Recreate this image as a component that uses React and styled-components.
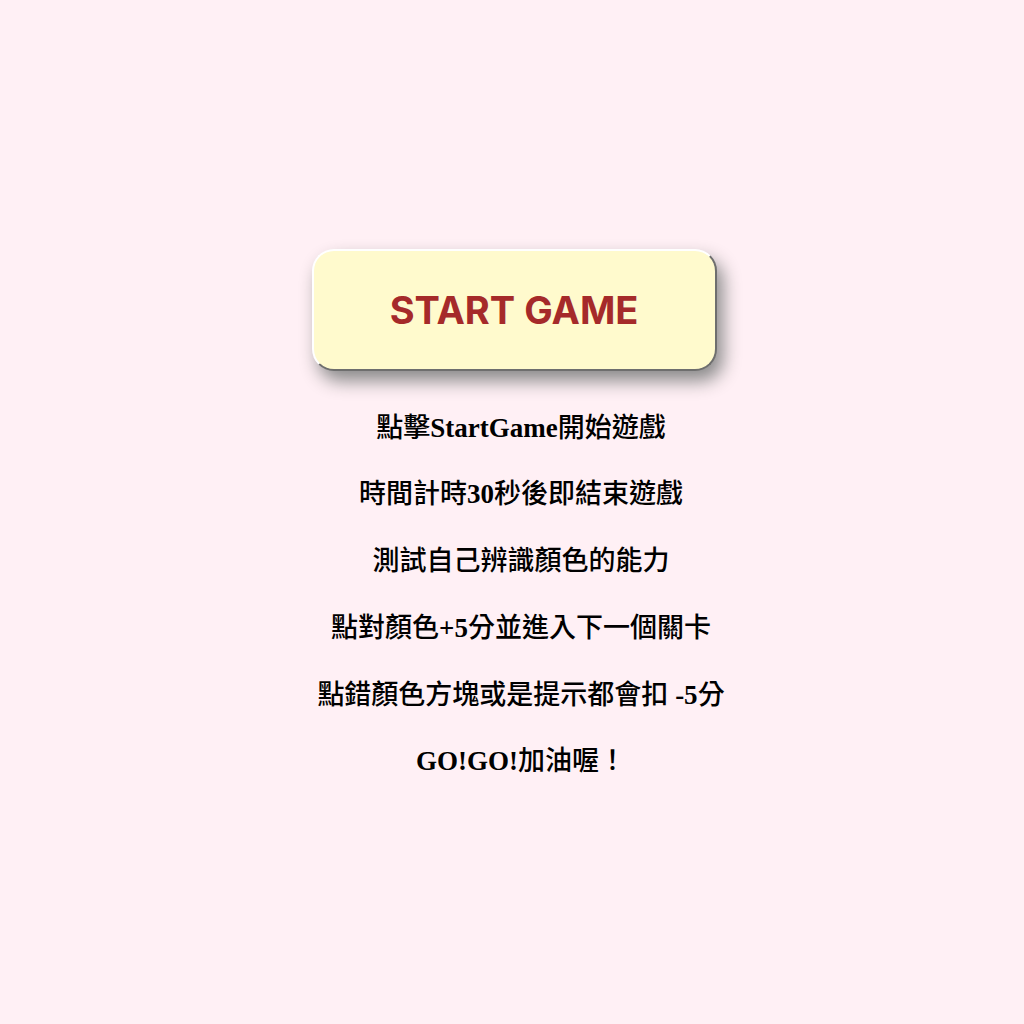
import React from 'react';
import styled, { createGlobalStyle } from 'styled-components';

const GlobalStyle = createGlobalStyle`
	html, body {
		margin: 0;
		padding: 0;
		background: #fff0f5;
	}
`;

const Page = styled.div`
	min-height: 100vh;
	display: flex;
	flex-direction: column;
	align-items: center;
	justify-content: center;
	padding: 6px 0 0 4px;
	box-sizing: border-box;
`;

const StartButton = styled.button`
	width: 405px;
	height: 122px;
	box-sizing: border-box;
	background: #fffacd;
	border: 2px solid #ffffff;
	border-bottom-color: #6e6e6e;
	border-right-color: #6e6e6e;
	border-radius: 22px;
	box-shadow: 6px 10px 18px #8a8a8a;
	color: #a52a2a;
	font-family: Inter, Roboto, 'Liberation Sans', sans-serif;
	font-weight: 700;
	font-size: 38px;
	cursor: pointer;
`;

const Rules = styled.div`
	margin-top: 37px;
	padding-left: 14px;
	display: flex;
	flex-direction: column;
	align-items: center;
	gap: 26.7px;
`;

const Rule = styled.p`
	margin: 0;
	line-height: 40px;
	font-family: 'Liberation Serif', 'Noto Sans CJK TC', serif;
	font-weight: 500;
	font-size: 27px;
	color: #000;
`;

const Latin = styled.span`
	font-weight: 700;
`;

const rules = [
	'點擊StartGame開始遊戲',
	'時間計時30秒後即結束遊戲',
	'測試自己辨識顏色的能力',
	'點對顏色+5分並進入下一個關卡',
	'點錯顏色方塊或是提示都會扣 -5分',
	'GO!GO!加油喔！',
];

// latin runs stay bold serif, CJK gets the lighter weight
const renderRule = text =>
	text.split(/([\x20-\x7e]+)/).map((part, i) =>
		/[\x20-\x7e]/.test(part) ? <Latin key={i}>{part}</Latin> : part
	);

export default function App() {
	return (
		<React.Fragment>
			<GlobalStyle />
			<Page>
				<StartButton>START GAME</StartButton>
				<Rules>
					{rules.map(text => (
						<Rule key={text}>{renderRule(text)}</Rule>
					))}
				</Rules>
			</Page>
		</React.Fragment>
	);
}
